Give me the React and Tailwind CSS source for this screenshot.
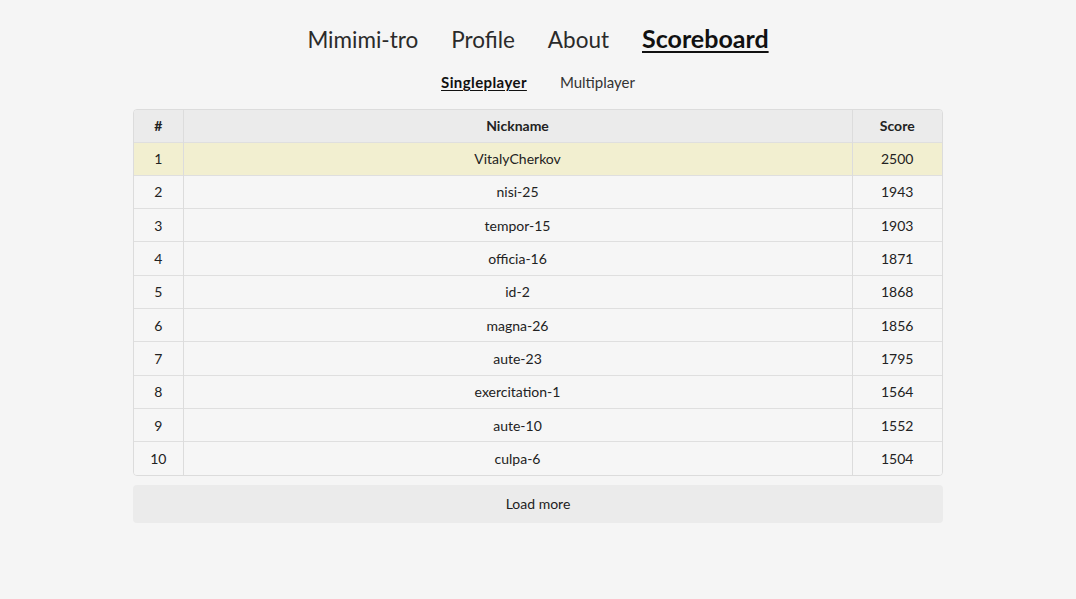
export default function App() {
  const rows = [
    ["1", "VitalyCherkov", "2500"],
    ["2", "nisi-25", "1943"],
    ["3", "tempor-15", "1903"],
    ["4", "officia-16", "1871"],
    ["5", "id-2", "1868"],
    ["6", "magna-26", "1856"],
    ["7", "aute-23", "1795"],
    ["8", "exercitation-1", "1564"],
    ["9", "aute-10", "1552"],
    ["10", "culpa-6", "1504"],
  ];
  return (
    <div className="min-h-[599px] bg-[#f5f5f5] text-[#222] font-['Lato',sans-serif]">
      <nav className="flex justify-center items-baseline gap-[33px] pt-[20px] text-[22.5px] leading-[36px] text-[#2a2a2a]">
        <a>Mimimi-tro</a>
        <a>Profile</a>
        <a>About</a>
        <a className="text-[25px] font-bold underline underline-offset-[3px] decoration-2 text-[#111]">Scoreboard</a>
      </nav>
      <div className="flex justify-center gap-[33px] mt-[14px] text-[15px] leading-[20px] text-[#333]">
        <a className="font-bold underline underline-offset-2 text-[#111] tracking-[0.4px]">Singleplayer</a>
        <a>Multiplayer</a>
      </div>
      <div className="mx-[133px] mt-[17px]">
        <div className="border border-[#dcdcdc] rounded-[4px] overflow-hidden">
          <table className="w-full border-collapse text-[14px] text-[#222] text-center">
            <thead>
              <tr className="bg-[#ebebeb] h-[32px]">
                <th className="w-[49px] font-bold border-r border-[#dcdcdc]">#</th>
                <th className="font-bold border-r border-[#dcdcdc]">Nickname</th>
                <th className="w-[90px] font-bold">Score</th>
              </tr>
            </thead>
            <tbody>
              {rows.map((r, i) => (
                <tr key={r[0]} className={(i === 0 ? "bg-[#f2efd0]" : "bg-[#f6f6f6]") + " h-[33.3px] border-t border-[#dfdfdf]"}>
                  <td className="border-r border-[#dcdcdc]">{r[0]}</td>
                  <td className="border-r border-[#dcdcdc]">{r[1]}</td>
                  <td>{r[2]}</td>
                </tr>
              ))}
            </tbody>
          </table>
        </div>
        <button className="mt-[9px] w-full h-[38px] bg-[#ebebeb] rounded-[4px] text-[14px] text-[#222]">Load more</button>
      </div>
    </div>
  );
}
